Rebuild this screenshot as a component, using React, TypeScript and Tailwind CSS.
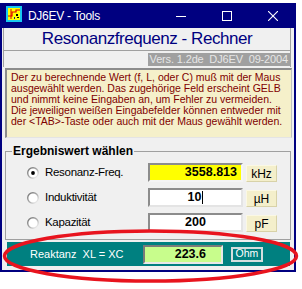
import React from "react";

function AppIcon() {
  return (
    <svg width="16" height="16" viewBox="0 0 16 16">
      <rect x="0" y="0" width="16" height="16" fill="#18c8f0" />
      <rect x="2" y="2" width="12" height="12" fill="#ffff00" />
      <polyline points="2,10 6,10 6,6 10,6 10,4 14,4" fill="none" stroke="#e00000" strokeWidth="1.2" />
      <line x1="5" y1="3" x2="5" y2="13" stroke="#e00000" strokeWidth="1" />
      <rect x="10" y="8" width="2" height="2" fill="#000" />
      <rect x="11" y="11" width="2" height="1" fill="#000" />
      <rect x="8" y="11" width="1" height="2" fill="#1a1a8c" />
    </svg>
  );
}

function Radio({ checked }: { checked?: boolean }) {
  return (
    <svg width="12" height="12" viewBox="0 0 12 12">
      <defs>
        <linearGradient id="rg" x1="0" y1="0" x2="1" y2="1">
          <stop offset="0" stopColor="#6e6e6e" />
          <stop offset="0.55" stopColor="#b0b0b0" />
          <stop offset="1" stopColor="#ffffff" />
        </linearGradient>
      </defs>
      <circle cx="6" cy="6" r="5.3" fill="#ffffff" stroke="url(#rg)" strokeWidth="1.4" />
      {checked && <circle cx="6" cy="6" r="1.9" fill="#000" />}
    </svg>
  );
}

function Row({
  label,
  checked,
  value,
  unit,
  yellow,
  cursor,
}: {
  label: string;
  checked?: boolean;
  value: string;
  unit: string;
  yellow?: boolean;
  cursor?: boolean;
}) {
  return (
    <div className="mt-[6px] flex h-[19px] items-center pl-[21px]">
      <Radio checked={checked} />
      <span className="ml-[6px] w-[103px] text-[11.5px] tracking-[-0.3px] text-black">{label}</span>
      <div
        className={
          yellow
            ? "flex h-[19px] w-[95px] items-center justify-end border-2 border-t-[#8c8c8c] border-l-[#8c8c8c] border-r-[#f4f4f4] border-b-[#f4f4f4] bg-[#ffff00] pr-[4px] text-[12.5px] font-bold text-black"
            : "flex h-[19px] w-[95px] items-center justify-center border-2 border-t-[#8c8c8c] border-l-[#8c8c8c] border-r-[#e4e4e4] border-b-[#e4e4e4] bg-white text-[12.5px] font-bold text-black"
        }
      >
        <span>{value}</span>
        {cursor && <span className="ml-[1px] h-[13px] w-[1px] bg-black" />}
      </div>
      <div className="ml-[3px] flex h-[17px] w-[31px] items-center justify-center self-end border border-t-[#fbf8e4] border-l-[#fbf8e4] border-r-[#d8d2a8] border-b-[#d8d2a8] bg-[#f4efcb] text-[12px] text-black">
        {unit}
      </div>
    </div>
  );
}

export default function App() {
  return (
    <div className="relative h-[289px] w-[302px] overflow-hidden bg-white pt-[3px] font-['Liberation_Sans',Arial,sans-serif]">
      <div className="flex w-[296px] flex-col">
        {/* Title bar */}
        <div className="flex h-[25px] items-center bg-[#000080]">
          <div className="mb-[4px] ml-[6px] flex">
            <AppIcon />
          </div>
          <span className="ml-[6px] text-[12px] tracking-[-0.3px] text-white">DJ6EV - Tools</span>
          <div className="ml-auto flex h-full">
            <div className="flex h-full w-[46px] items-center justify-center">
              <svg width="10" height="10" viewBox="0 0 10 10">
                <line x1="0" y1="5.5" x2="10" y2="5.5" stroke="#fff" strokeWidth="1" />
              </svg>
            </div>
            <div className="flex h-full w-[46px] items-center justify-center">
              <svg width="10" height="10" viewBox="0 0 10 10">
                <rect x="0.5" y="0.5" width="9" height="9" fill="none" stroke="#fff" strokeWidth="1" />
              </svg>
            </div>
            <div className="flex h-full w-[46px] items-center justify-center">
              <svg width="10" height="10" viewBox="0 0 10 10">
                <line x1="0" y1="0" x2="10" y2="10" stroke="#fff" strokeWidth="1.1" />
                <line x1="10" y1="0" x2="0" y2="10" stroke="#fff" strokeWidth="1.1" />
              </svg>
            </div>
          </div>
        </div>

        {/* Body */}
        <div className="flex h-[244px] flex-col border-x-2 border-b-2 border-[#000080] bg-[#f0f0f0]">
          <div className="ml-[1px] w-[288px] border-x border-[#a0a0a0]">
            <div className="flex h-[23px] items-center justify-center border-b border-[#a0a0a0] text-[17px] tracking-[-0.45px] text-[#000080]">
              Resonanzfrequenz - Rechner
            </div>
            <div className="flex h-[16px] items-center justify-end">
              <div className="h-[13px] whitespace-pre bg-[#a0a0a0] px-[2px] text-[11px] leading-[13px] tracking-[-0.15px] text-[#e6e6e6]">
                Vers. 1.2de  DJ6EV  09-2004
              </div>
            </div>
          </div>

          <div className="ml-[3px] mt-[1px] h-[70px] w-[287px] whitespace-nowrap border-b border-l-2 border-r border-t-2 border-b-[#e4e4e4] border-l-[#8c8c8c] border-r-[#c0c0c0] border-t-[#8c8c8c] bg-[#f5f0ca] pl-[4px] pt-[2px] text-[10.5px] leading-[11.1px] text-[#800000]">
            Der zu berechnende Wert (f, L, oder C) muß mit der Maus
            <br />
            ausgewählt werden. Das zugehörige Feld erscheint GELB
            <br />
            und nimmt keine Eingaben an, um Fehler zu vermeiden.
            <br />
            Die jeweiligen weißen Eingabefelder können entweder mit
            <br />
            der &lt;TAB&gt;-Taste oder auch mit der Maus gewählt werden.
          </div>

          <fieldset className="ml-[3px] mt-[7px] h-[95px] w-[286px] border border-[#a0a0a0]">
            <legend className="ml-[6px] px-[1px] text-[12px] font-bold leading-[12px] text-black">
              Ergebniswert wählen
            </legend>
            <Row label="Resonanz-Freq." checked value="3558.813" unit="kHz" yellow />
            <Row label="Induktivität" value="10" unit="µH" cursor />
            <Row label="Kapazität" value="200" unit="pF" />
          </fieldset>

          <div className="ml-[5px] mt-[2px] flex h-[24px] w-[283px] items-center bg-[#008080] pl-[23px]">
            <span className="w-[113px] whitespace-pre text-[11px] text-white">Reaktanz  XL = XC</span>
            <div className="flex h-[19px] w-[80px] items-center justify-end border-2 border-b-[#e8e8e8] border-l-[#7a7a7a] border-r-[#e8e8e8] border-t-[#7a7a7a] bg-[#c8fd8c] pr-[15px] text-[12.5px] font-bold text-black">
              223.6
            </div>
            <div className="ml-[8px] flex h-[15px] w-[32px] items-center justify-center border-2 border-[#d4dede] text-[10.5px] text-white">
              Ohm
            </div>
          </div>
        </div>
      </div>

      {/* red annotation ellipse */}
      <svg className="pointer-events-none absolute left-0 top-0" width="302" height="289" viewBox="0 0 302 289">
        <ellipse cx="150.5" cy="256" rx="146" ry="25" fill="none" stroke="#e8141e" strokeWidth="3.5" />
      </svg>
    </div>
  );
}
